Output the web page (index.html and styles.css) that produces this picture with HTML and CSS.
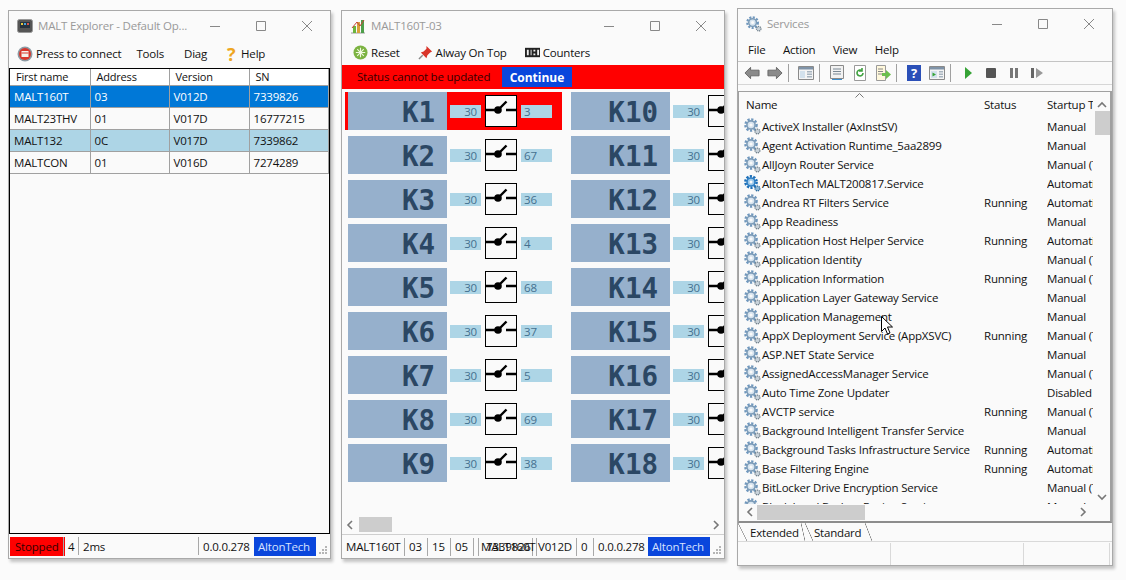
FILE: index.html
```html
<!DOCTYPE html>
<html lang="en">
<head>
    <meta charset="UTF-8">
    <meta name="viewport" content="width=device-width, initial-scale=1.0">
    <title>MALT Explorer desktop</title>
    <link rel="stylesheet" href="styles.css">
</head>
<body>
    <svg class="defs" width="0" height="0">
        <symbol id="caption-min" viewBox="0 0 10 10"><path d="M0 5.500h10" stroke="#888" fill="none"/></symbol>
        <symbol id="caption-max" viewBox="0 0 10 10"><path d="M.5.5h9v9h-9z" stroke="#888" fill="none"/></symbol>
        <symbol id="caption-close" viewBox="0 0 10 10"><path d="M0 0l10 10M10 0L0 10" stroke="#888" fill="none"/></symbol>
        <symbol id="gear" viewBox="0 0 17 17">
            <circle cx="7" cy="7" r="5.6" fill="none" stroke="#6f97bd" stroke-width="2.4" stroke-dasharray="2.2 1.5"/>
            <circle cx="7" cy="7" r="4.1" fill="#d7e4ef" stroke="#7d9cb8" stroke-width="1.6"/>
            <circle cx="7" cy="7" r="1.6" fill="#fafafa"/>
            <circle cx="13.5" cy="13.5" r="2.4" fill="#c9d3db" stroke="#71808c" stroke-width="1.3" stroke-dasharray="1.2 .7"/>
        </symbol>
        <symbol id="gear-live" viewBox="0 0 17 17">
            <circle cx="7" cy="7" r="5.6" fill="none" stroke="#1d6fb8" stroke-width="2.6" stroke-dasharray="2.2 1.3"/>
            <circle cx="7" cy="7" r="4" fill="#9cc8ea" stroke="#2d7fc4" stroke-width="1.6"/>
            <circle cx="7" cy="7" r="1.5" fill="#fafafa"/>
            <circle cx="13.5" cy="13.5" r="2.4" fill="#8fb9d8" stroke="#2c6b9e" stroke-width="1.3" stroke-dasharray="1.2 .7"/>
        </symbol>
        <symbol id="switch" viewBox="0 0 30 30">
            <path d="M0 14h11M20 14h10" stroke="#000" stroke-width="2.400"/>
            <path d="M12 14L20.500 5.500" stroke="#000" stroke-width="2.400"/>
            <circle cx="12" cy="14" r="3.800" fill="#000"/>
        </symbol>
        <symbol id="grip" viewBox="0 0 10 10">
            <path d="M7 1h2v2H7zM4 4h2v2H4zM7 4h2v2H7zM1 7h2v2H1zM4 7h2v2H4zM7 7h2v2H7z" fill="#b5b5b5"/>
        </symbol>
        <symbol id="mmc-pane" viewBox="0 0 16 14">
            <path d="M.5.5h15v13H.5z" fill="#f4f4f4" stroke="#8a8a8a"/>
            <path d="M1 1h14v2.500H1z" fill="#7f93a8"/>
            <path d="M2 5h5v7H2z" fill="#d3e1ec"/>
            <path d="M9 5h5v1.500H9zM9 7.500h5V9H9zM9 10h5v1.500H9z" fill="#a7b4bf"/>
        </symbol>
    </svg>

    <section class="window explorer">
        <header class="titlebar">
            <svg class="app-icon" viewBox="0 0 16 16"><rect x=".5" y="1.500" width="15" height="13" rx="2" fill="#555" stroke="#999"/><rect x="3" y="4" width="10" height="6" fill="#26323d"/><path d="M4 5h2v2H4z" fill="#e7c73c"/><path d="M7 5h2v2H7z" fill="#46a3e0"/><path d="M10 5h2v2h-2z" fill="#d4544a"/></svg>
            <span class="title">MALT Explorer - Default Op...</span>
            <div class="caption">
                <svg><use href="#caption-min"/></svg>
                <svg><use href="#caption-max"/></svg>
                <svg><use href="#caption-close"/></svg>
            </div>
        </header>
        <nav class="menu explorer-menu">
            <span class="menu-item connect">
                <svg class="menu-icon big" viewBox="0 0 16 16"><circle cx="8" cy="8" r="7.500" fill="#8d9aa3"/><circle cx="8" cy="8" r="6" fill="#d8362c"/><path d="M4.500 5h7v6h-7z" fill="#f5f0ea"/><path d="M4.500 7h7" stroke="#d8362c"/></svg>
                Press to connect
            </span>
            <span class="menu-item tools">Tools</span>
            <span class="menu-item diag">Diag</span>
            <span class="menu-item help"><span class="help-mark">?</span>Help</span>
        </nav>
        <div class="device-frame">
            <table class="devices">
                <thead>
                    <tr><th>First name</th><th>Address</th><th>Version</th><th>SN</th></tr>
                </thead>
                <tbody>
                    <tr class="selected"><td>MALT160T</td><td>03</td><td>V012D</td><td>7339826</td></tr>
                    <tr><td>MALT23THV</td><td>01</td><td>V017D</td><td>16777215</td></tr>
                    <tr class="marked"><td>MALT132</td><td>0C</td><td>V017D</td><td>7339862</td></tr>
                    <tr><td>MALTCON</td><td>01</td><td>V016D</td><td>7274289</td></tr>
                </tbody>
            </table>
        </div>
        <footer class="statusbar explorer-status">
            <span class="stopped">Stopped</span>
            <span class="cell count">4</span>
            <span class="cell time">2ms</span>
            <span class="cell build">0.0.0.278</span>
            <span class="brand">AltonTech</span>
            <svg class="grip"><use href="#grip"/></svg>
        </footer>
    </section>

    <section class="window relays">
        <header class="titlebar">
            <svg class="app-icon" viewBox="0 0 16 16"><path d="M1 15h14" stroke="#999"/><path d="M3 8h3v7H3z" fill="#6bb53c"/><path d="M7 4h3v11H7z" fill="#d8a23a"/><path d="M11 2h3v13h-3z" fill="#4d9e4a"/><path d="M2 10l5-6 3 4 4-6" stroke="#c8423a" fill="none"/></svg>
            <span class="title">MALT160T-03</span>
            <div class="caption">
                <svg><use href="#caption-min"/></svg>
                <svg><use href="#caption-max"/></svg>
                <svg><use href="#caption-close"/></svg>
            </div>
        </header>
        <nav class="menu relays-menu">
            <span class="menu-item reset">
                <svg class="menu-icon" viewBox="0 0 16 16"><circle cx="8" cy="8" r="7.500" fill="#7cb342"/><path d="M8 3v10M3 8h10M4.500 4.500l7 7M11.500 4.500l-7 7" stroke="#f1f8e0" stroke-width="1.200"/></svg>
                Reset
            </span>
            <span class="menu-item pin">
                <svg class="menu-icon" viewBox="0 0 16 16"><path d="M9 1l6 6-2 1-3 3-1 3-6-6 3-1 3-3z" fill="#d9352a"/><path d="M5 11l-4 4" stroke="#888" stroke-width="1.500"/></svg>
                Alway On Top
            </span>
            <span class="menu-item counters">
                <svg class="menu-icon" viewBox="0 0 16 16"><path d="M0 3h16v10H0z" fill="#222"/><path d="M2 5h2v6H2zM6 5h1v6H6zM9 5h2v2H9zM9 9h2v2H9zM13 5h2v6h-2z" fill="#eee"/></svg>
                Counters
            </span>
        </nav>
        <div class="alert">
            <span class="alert-text">Status cannot be updated</span>
            <button class="continue">Continue</button>
        </div>
        <div class="relay-pane">
            <div class="relay-grid">
                <div class="relay fault"><span class="tile">K1</span><span class="field value">30</span><svg class="switch"><use href="#switch"/></svg><span class="field">3</span></div>
                <div class="relay"><span class="tile">K2</span><span class="field value">30</span><svg class="switch"><use href="#switch"/></svg><span class="field">67</span></div>
                <div class="relay"><span class="tile">K3</span><span class="field value">30</span><svg class="switch"><use href="#switch"/></svg><span class="field">36</span></div>
                <div class="relay"><span class="tile">K4</span><span class="field value">30</span><svg class="switch"><use href="#switch"/></svg><span class="field">4</span></div>
                <div class="relay"><span class="tile">K5</span><span class="field value">30</span><svg class="switch"><use href="#switch"/></svg><span class="field">68</span></div>
                <div class="relay"><span class="tile">K6</span><span class="field value">30</span><svg class="switch"><use href="#switch"/></svg><span class="field">37</span></div>
                <div class="relay"><span class="tile">K7</span><span class="field value">30</span><svg class="switch"><use href="#switch"/></svg><span class="field">5</span></div>
                <div class="relay"><span class="tile">K8</span><span class="field value">30</span><svg class="switch"><use href="#switch"/></svg><span class="field">69</span></div>
                <div class="relay"><span class="tile">K9</span><span class="field value">30</span><svg class="switch"><use href="#switch"/></svg><span class="field">38</span></div>
                <div class="relay"><span class="tile">K10</span><span class="field value">30</span><svg class="switch"><use href="#switch"/></svg></div>
                <div class="relay"><span class="tile">K11</span><span class="field value">30</span><svg class="switch"><use href="#switch"/></svg></div>
                <div class="relay"><span class="tile">K12</span><span class="field value">30</span><svg class="switch"><use href="#switch"/></svg></div>
                <div class="relay"><span class="tile">K13</span><span class="field value">30</span><svg class="switch"><use href="#switch"/></svg></div>
                <div class="relay"><span class="tile">K14</span><span class="field value">30</span><svg class="switch"><use href="#switch"/></svg></div>
                <div class="relay"><span class="tile">K15</span><span class="field value">30</span><svg class="switch"><use href="#switch"/></svg></div>
                <div class="relay"><span class="tile">K16</span><span class="field value">30</span><svg class="switch"><use href="#switch"/></svg></div>
                <div class="relay"><span class="tile">K17</span><span class="field value">30</span><svg class="switch"><use href="#switch"/></svg></div>
                <div class="relay"><span class="tile">K18</span><span class="field value">30</span><svg class="switch"><use href="#switch"/></svg></div>
            </div>
            <div class="hscroll relay-scroll">
                <svg class="chev" viewBox="0 0 8 10"><path d="M6 1L2 5l4 4" stroke="#777" stroke-width="1.600" fill="none"/></svg>
                <span class="thumb"></span>
                <svg class="chev end" viewBox="0 0 8 10"><path d="M2 1l4 4-4 4" stroke="#777" stroke-width="1.600" fill="none"/></svg>
            </div>
        </div>
        <footer class="statusbar relays-status">
            <span class="cell s-name">MALT160T</span>
            <span class="cell s-num">03</span>
            <span class="cell s-num">15</span>
            <span class="cell s-num">05</span>
            <span class="cell s-stack"><span>MALT160T</span><span>7339826</span></span>
            <span class="cell s-version">V012D</span>
            <span class="cell s-zero">0</span>
            <span class="cell s-build">0.0.0.278</span>
            <span class="brand">AltonTech</span>
            <svg class="grip"><use href="#grip"/></svg>
        </footer>
    </section>

    <section class="window services">
        <header class="titlebar">
            <svg class="app-icon" viewBox="0 0 17 17"><use href="#gear"/></svg>
            <span class="title">Services</span>
            <div class="caption">
                <svg><use href="#caption-min"/></svg>
                <svg><use href="#caption-max"/></svg>
                <svg><use href="#caption-close"/></svg>
            </div>
        </header>
        <nav class="menu services-menu">
            <span class="menu-item">File</span>
            <span class="menu-item">Action</span>
            <span class="menu-item">View</span>
            <span class="menu-item">Help</span>
        </nav>
        <div class="toolbar">
            <span class="tool"><svg viewBox="0 0 17 14"><path d="M1 7l6-6v3h9v6H7v3z" fill="#8b8b8b" stroke="#666"/></svg></span>
            <span class="tool"><svg viewBox="0 0 17 14"><path d="M16 7l-6-6v3H1v6h9v3z" fill="#8b8b8b" stroke="#666"/></svg></span>
            <span class="tool-sep"></span>
            <span class="tool"><svg viewBox="0 0 16 14"><use href="#mmc-pane"/></svg></span>
            <span class="tool-sep"></span>
            <span class="tool"><svg viewBox="0 0 16 16"><path d="M1.500.5h13v13h-13z" fill="#f2f2f2" stroke="#8a8a8a"/><path d="M4 4h8M4 6.500h8M4 9h8" stroke="#7a8894"/><path d="M3 14.500h10" stroke="#3d8fd0"/></svg></span>
            <span class="tool"><svg viewBox="0 0 16 16"><path d="M2.500.5h11v15h-11z" fill="#fff" stroke="#9a9a9a"/><path d="M11 8a3 3 0 1 1-1-2.300M10 3v3H7" stroke="#3fa03f" stroke-width="1.600" fill="none"/></svg></span>
            <span class="tool"><svg viewBox="0 0 16 16"><path d="M1.500.5h9v15h-9z" fill="#fff8dc" stroke="#9a9a9a"/><path d="M3 4h5M3 6.500h5M3 9h4" stroke="#888"/><path d="M7 8h4V5l5 4.500L11 14v-3H7z" fill="#6cbf4b"/></svg></span>
            <span class="tool-sep"></span>
            <span class="tool"><svg viewBox="0 0 14 16"><path d="M0 0h14v16H0z" fill="#2b50b8"/><text x="7" y="13" class="book-mark">?</text></svg></span>
            <span class="tool"><svg viewBox="0 0 16 14"><path d="M.5.5h15v13H.5z" fill="#f4f4f4" stroke="#8a8a8a"/><path d="M1 1h14v2.500H1z" fill="#7f93a8"/><path d="M2 5h6v7H2z" fill="#d3e1ec"/><path d="M3.500 6.500L7 8.500l-3.500 2z" fill="#37a437"/><path d="M10 5h4v1.500h-4zM10 7.500h4V9h-4zM10 10h4v1.500h-4z" fill="#a7b4bf"/></svg></span>
            <span class="tool-sep"></span>
            <span class="tool"><svg viewBox="0 0 16 16"><path d="M5 2l7 6-7 6z" fill="#36a336"/></svg></span>
            <span class="tool"><svg viewBox="0 0 16 16"><rect x="3" y="3" width="10" height="10" rx="1" fill="#555"/></svg></span>
            <span class="tool"><svg viewBox="0 0 16 16"><path d="M4 3h3v10H4zM9 3h3v10H9z" fill="#777"/></svg></span>
            <span class="tool"><svg viewBox="0 0 16 16"><path d="M2 3h3v10H2z" fill="#666"/><path d="M7 3l7 5-7 5z" fill="#999"/></svg></span>
        </div>
        <div class="list-frame">
            <div class="list-body">
                <div class="list-main">
                    <div class="svc-row svc-head">
                        <span class="svc-name">Name</span>
                        <span class="svc-status">Status</span>
                        <span class="svc-start">Startup Type</span>
                        <svg class="sort-caret" viewBox="0 0 9 5"><path d="M.5 4.500l4-4 4 4" stroke="#777" fill="none"/></svg>
                    </div>
                    <div class="svc-row"><span class="svc-name"><svg class="gear"><use href="#gear"/></svg>ActiveX Installer (AxInstSV)</span><span class="svc-status"></span><span class="svc-start">Manual</span></div>
                    <div class="svc-row"><span class="svc-name"><svg class="gear"><use href="#gear"/></svg>Agent Activation Runtime_5aa2899</span><span class="svc-status"></span><span class="svc-start">Manual</span></div>
                    <div class="svc-row"><span class="svc-name"><svg class="gear"><use href="#gear"/></svg>AllJoyn Router Service</span><span class="svc-status"></span><span class="svc-start">Manual (Trigger Start)</span></div>
                    <div class="svc-row"><span class="svc-name"><svg class="gear"><use href="#gear-live"/></svg>AltonTech MALT200817.Service</span><span class="svc-status"></span><span class="svc-start">Automatic</span></div>
                    <div class="svc-row"><span class="svc-name"><svg class="gear"><use href="#gear"/></svg>Andrea RT Filters Service</span><span class="svc-status">Running</span><span class="svc-start">Automatic</span></div>
                    <div class="svc-row"><span class="svc-name"><svg class="gear"><use href="#gear"/></svg>App Readiness</span><span class="svc-status"></span><span class="svc-start">Manual</span></div>
                    <div class="svc-row"><span class="svc-name"><svg class="gear"><use href="#gear"/></svg>Application Host Helper Service</span><span class="svc-status">Running</span><span class="svc-start">Automatic</span></div>
                    <div class="svc-row"><span class="svc-name"><svg class="gear"><use href="#gear"/></svg>Application Identity</span><span class="svc-status"></span><span class="svc-start">Manual (Trigger Start)</span></div>
                    <div class="svc-row"><span class="svc-name"><svg class="gear"><use href="#gear"/></svg>Application Information</span><span class="svc-status">Running</span><span class="svc-start">Manual (Trigger Start)</span></div>
                    <div class="svc-row"><span class="svc-name"><svg class="gear"><use href="#gear"/></svg>Application Layer Gateway Service</span><span class="svc-status"></span><span class="svc-start">Manual</span></div>
                    <div class="svc-row"><span class="svc-name"><svg class="gear"><use href="#gear"/></svg>Application Management</span><span class="svc-status"></span><span class="svc-start">Manual</span></div>
                    <div class="svc-row"><span class="svc-name"><svg class="gear"><use href="#gear"/></svg>AppX Deployment Service (AppXSVC)</span><span class="svc-status">Running</span><span class="svc-start">Manual (Trigger Start)</span></div>
                    <div class="svc-row"><span class="svc-name"><svg class="gear"><use href="#gear"/></svg>ASP.NET State Service</span><span class="svc-status"></span><span class="svc-start">Manual</span></div>
                    <div class="svc-row"><span class="svc-name"><svg class="gear"><use href="#gear"/></svg>AssignedAccessManager Service</span><span class="svc-status"></span><span class="svc-start">Manual (Trigger Start)</span></div>
                    <div class="svc-row"><span class="svc-name"><svg class="gear"><use href="#gear"/></svg>Auto Time Zone Updater</span><span class="svc-status"></span><span class="svc-start">Disabled</span></div>
                    <div class="svc-row"><span class="svc-name"><svg class="gear"><use href="#gear"/></svg>AVCTP service</span><span class="svc-status">Running</span><span class="svc-start">Manual (Trigger Start)</span></div>
                    <div class="svc-row"><span class="svc-name"><svg class="gear"><use href="#gear"/></svg>Background Intelligent Transfer Service</span><span class="svc-status"></span><span class="svc-start">Manual</span></div>
                    <div class="svc-row"><span class="svc-name"><svg class="gear"><use href="#gear"/></svg>Background Tasks Infrastructure Service</span><span class="svc-status">Running</span><span class="svc-start">Automatic</span></div>
                    <div class="svc-row"><span class="svc-name"><svg class="gear"><use href="#gear"/></svg>Base Filtering Engine</span><span class="svc-status">Running</span><span class="svc-start">Automatic</span></div>
                    <div class="svc-row"><span class="svc-name"><svg class="gear"><use href="#gear"/></svg>BitLocker Drive Encryption Service</span><span class="svc-status"></span><span class="svc-start">Manual (Trigger Start)</span></div>
                    <div class="svc-row"><span class="svc-name"><svg class="gear"><use href="#gear"/></svg>Block Level Backup Engine Service</span><span class="svc-status"></span><span class="svc-start">Manual</span></div>
                </div>
                <div class="vscroll">
                    <svg class="vchev" viewBox="0 0 10 8"><path d="M1 6l4-4 4 4" stroke="#777" stroke-width="1.600" fill="none"/></svg>
                    <span class="vthumb"></span>
                    <svg class="vchev vend" viewBox="0 0 10 8"><path d="M1 2l4 4 4-4" stroke="#777" stroke-width="1.600" fill="none"/></svg>
                </div>
            </div>
            <div class="hscroll list-scroll">
                <svg class="chev" viewBox="0 0 8 10"><path d="M6 1L2 5l4 4" stroke="#777" stroke-width="1.600" fill="none"/></svg>
                <span class="thumb"></span>
                <svg class="chev end" viewBox="0 0 8 10"><path d="M2 1l4 4-4 4" stroke="#777" stroke-width="1.600" fill="none"/></svg>
            </div>
        </div>
        <div class="tabs">
            <span class="tab">Extended</span>
            <span class="tab">Standard</span>
        </div>
        <footer class="svc-status-bar">
            <span></span><span></span><span></span>
        </footer>
    </section>

    <svg class="cursor" viewBox="0 0 12 19"><path d="M.5.500v15l3.500-3.500 2.500 6 2.500-1-2.500-6h5z" fill="#fff" stroke="#000"/></svg>
</body>
</html>
```

FILE: styles.css
```css
* {
    box-sizing: border-box;
}
html, body {
    margin: 0;
    height: 100%;
}
body {
    position: relative;
    overflow: hidden;
    width: 1126px;
    height: 580px;
    background-color: #fbfbfb;
    font-family: "Open Sans", "Noto Sans", sans-serif;
    font-size: 11.5px;
    letter-spacing: -0.2px;
    color: #111;
}
.defs {
    position: absolute;
}

/* windows sit on the desktop */
.window {
    position: absolute;
    display: flex;
    flex-direction: column;
    background: #fafafa;
    border: 1px solid #a9a9a9;
    box-shadow: 2px 3px 3px rgba(0, 0, 0, 0.22);
    overflow: hidden;
}
.explorer {
    left: 8px;
    top: 10px;
    width: 323px;
    height: 549px;
}
.relays {
    left: 341px;
    top: 10px;
    width: 384px;
    height: 549px;
}
.services {
    left: 737px;
    top: 8px;
    width: 376px;
    height: 558px;
}

.titlebar {
    display: flex;
    align-items: center;
    height: 29px;
    flex: none;
    padding-left: 8px;
}
.app-icon {
    width: 16px;
    height: 16px;
    flex: none;
    margin-right: 5px;
}
.title {
    color: #999;
    white-space: nowrap;
}
.caption {
    display: flex;
    flex: none;
    margin-left: auto;
}
.caption svg {
    width: 46px;
    height: 10px;
}

.menu {
    display: flex;
    align-items: center;
    flex: none;
}
.menu-item {
    display: flex;
    align-items: center;
    white-space: nowrap;
}
.menu-icon {
    width: 15px;
    height: 15px;
    margin-right: 3px;
}
.menu-icon.big {
    width: 16px;
    height: 16px;
    margin-right: 3px;
}
.explorer-menu {
    height: 28px;
    padding: 0 0 1px 8px;
}
.tools {
    margin-left: 15px;
}
.diag {
    margin-left: 20px;
}
.help {
    margin-left: 17px;
}
.help-mark {
    width: 14px;
    margin-right: 3px;
    color: #eea621;
    font-size: 18px;
    font-weight: 700;
    line-height: 16px;
    text-align: center;
}
.relays-menu {
    height: 25px;
    padding-left: 11px;
}
.pin {
    margin-left: 18px;
}
.counters {
    margin-left: 18px;
}
.services-menu {
    height: 24px;
    padding-left: 10px;
    gap: 17.5px;
    border-bottom: 1px solid #c4c4c4;
}

/* device list */
.device-frame {
    flex: 1;
    background: #fafafa;
    border: 1px solid #000;
}
.devices {
    width: 319px;
    table-layout: fixed;
    border-collapse: collapse;
}
.devices th, .devices td {
    padding: 0 0 0 4px;
    border: 1px solid #a0a0a0;
    font-weight: 400;
    text-align: left;
    white-space: nowrap;
}
.devices th {
    height: 16px;
    padding-left: 6px;
    border-top: 0;
    border-left-color: #d6d6d6;
    background: #fff;
    font-size: 11px;
}
.devices td {
    height: 22px;
}
.devices th:first-child, .devices td:first-child {
    width: 80px;
    border-left: 0;
}
.devices th:nth-child(2), .devices td:nth-child(2) {
    width: 79px;
}
.devices th:nth-child(3), .devices td:nth-child(3) {
    width: 80px;
}
.selected td {
    background: #0078d7;
    color: #fff;
}
.marked td {
    background: #add5e6;
}

/* status bars */
.statusbar {
    display: flex;
    align-items: center;
    flex: none;
    height: 24px;
}
.cell {
    display: flex;
    align-items: center;
    height: 18px;
    padding-left: 4px;
    border-right: 1px solid #a8a8a8;
    white-space: nowrap;
}
.brand {
    display: flex;
    align-items: center;
    height: 19px;
    padding-left: 4px;
    background: #0a46dc;
    color: #d5e2ff;
}
.grip {
    width: 10px;
    height: 10px;
    align-self: flex-end;
    margin: 0 2px 3px auto;
}
.explorer-status {
    padding-left: 1px;
}
.stopped {
    display: flex;
    align-items: center;
    width: 54px;
    height: 19px;
    padding-left: 5px;
    background: #f00;
    color: #300;
    border-right: 1px solid #a8a8a8;
    box-shadow: 1px 0 0 #f00;
}
.count {
    width: 15px;
}
.time {
    width: 120px;
}
.build {
    width: 55px;
    padding-left: 4px;
    border-right: 0;
}
.explorer-status .brand {
    width: 62px;
}
.relays-status {
    border-top: 1px solid #cfcfcf;
    padding-left: 4px;
}
.s-name {
    width: 59px;
    padding-left: 0;
}
.s-num {
    width: 23px;
}
.s-stack {
    display: grid;
    width: 55px;
    padding-left: 2px;
    border-left: 1px solid #a8a8a8;
    margin-left: 4px;
}
.s-stack span {
    grid-area: 1 / 1;
}
.s-stack span:last-child {
    margin-left: 5px;
}
.s-version {
    width: 41px;
    padding-left: 1px;
    margin-left: 3px;
    border-left: 1px solid #a8a8a8;
}
.s-zero {
    width: 17px;
}
.s-build {
    width: 54px;
    border-right: 0;
}
.relays-status .brand {
    width: 62px;
}

/* relay board */
.alert {
    display: flex;
    align-items: center;
    flex: none;
    height: 24px;
    padding-left: 15px;
    background: #f00;
}
.alert-text {
    width: 145px;
    padding-bottom: 1px;
    color: #300;
}
.continue {
    width: 70px;
    height: 20px;
    padding: 0;
    border: 0;
    background: #0a46dc;
    color: #fff;
    font-family: inherit;
    font-size: 12px;
    font-weight: 700;
}
.relay-pane {
    display: flex;
    flex-direction: column;
    flex: 1;
    min-height: 0;
}
.relay-grid {
    flex: 1;
    display: grid;
    grid-template-rows: repeat(9, 38px);
    grid-auto-flow: column;
    grid-auto-columns: 214px;
    column-gap: 9px;
    row-gap: 6px;
    padding: 3px 0 0 6px;
    overflow: hidden;
}
.relay {
    display: flex;
    align-items: center;
    height: 38px;
}
.relay.fault {
    width: 217px;
    margin-left: -3px;
    padding-left: 3px;
    background: #f00;
}
.tile {
    width: 99px;
    height: 38px;
    flex: none;
    padding-right: 12px;
    background: #96b0cc;
    color: #2b4764;
    font-family: "DejaVu Sans Mono", monospace;
    font-size: 27.5px;
    font-weight: 700;
    letter-spacing: 0;
    line-height: 40px;
    text-align: right;
}
.field {
    width: 31px;
    height: 13px;
    flex: none;
    padding-left: 3px;
    background: #add5e6;
    color: #44708f;
    line-height: 13px;
}
.field.value {
    margin: 0 4px 0 3px;
    padding: 0 4px 0 0;
    text-align: right;
}
.switch {
    width: 32px;
    height: 32px;
    flex: none;
    margin-right: 4px;
    border: 1px solid #000;
    background: #fafafa;
}

/* scrollbars */
.hscroll {
    display: flex;
    align-items: center;
    flex: none;
    height: 17px;
}
.relay-scroll {
    margin-bottom: 1px;
    padding-left: 4px;
}
.chev {
    width: 8px;
    height: 10px;
}
.chev.end {
    margin-left: auto;
    margin-right: 4px;
}
.thumb {
    height: 15px;
    background: #cdcdcd;
}
.relay-scroll .thumb {
    width: 33px;
    margin-left: 5px;
}

/* services console */
.toolbar {
    display: flex;
    align-items: center;
    flex: none;
    height: 23px;
    padding-left: 2px;
    border-bottom: 1px solid #d6d6d6;
}
.tool {
    display: flex;
    align-items: center;
    justify-content: center;
    width: 23px;
    height: 18px;
}
.tool svg {
    width: 16px;
    height: 16px;
}
.tool-sep {
    width: 1px;
    height: 18px;
    margin: 0 5px 0 2px;
    background: #a0a0a0;
}
.book-mark {
    fill: #fff;
    font-size: 13px;
    font-weight: 700;
    text-anchor: middle;
}
.list-frame {
    display: flex;
    flex-direction: column;
    height: 432px;
    flex: none;
    margin-top: 6px;
    border: 1px solid #a0a0a0;
    border-bottom: 2px solid #8c8c8c;
    border-right-width: 2px;
}
.list-body {
    display: flex;
    flex: 1;
    min-height: 0;
}
.list-main {
    position: relative;
    flex: 1;
    min-width: 0;
    overflow: hidden;
}
.svc-row {
    display: flex;
    align-items: center;
    height: 19px;
    padding-left: 5px;
    white-space: nowrap;
}
.svc-head {
    height: 25px;
    padding-left: 7px;
}
.svc-name {
    display: flex;
    align-items: center;
    width: 240px;
    flex: none;
}
.svc-head .svc-name {
    width: 238px;
}
.svc-status {
    width: 63px;
    flex: none;
}
.svc-start {
    width: 46px;
    flex: none;
    overflow: hidden;
}
.gear {
    width: 17px;
    height: 17px;
    margin-right: 1px;
    flex: none;
}
/* small arrow resting on the header */
.sort-caret {
    position: absolute;
    left: 116px;
    top: 1px;
    width: 9px;
    height: 5px;
}
.vscroll {
    display: flex;
    flex-direction: column;
    align-items: center;
    width: 16px;
    flex: none;
    padding-top: 9px;
}
.vchev {
    width: 10px;
    height: 8px;
    flex: none;
}
.vthumb {
    width: 15px;
    height: 24px;
    margin-top: 2px;
    background: #cdcdcd;
}
.vchev.vend {
    margin-top: auto;
    margin-bottom: 3px;
}
.list-scroll {
    padding-left: 7px;
    height: 16px;
    margin-bottom: 1px;
}
.list-scroll .thumb {
    width: 108px;
    margin-left: 3px;
}
.list-scroll .chev.end {
    margin-right: 23px;
}

.tabs {
    display: flex;
    flex: none;
    height: 19px;
    border-bottom: 1px solid #d9d9d9;
}
.tab {
    display: flex;
    align-items: center;
    width: 67px;
    height: 18px;
    padding: 0 0 0 12px;
}
.tab:first-child {
    background:
        linear-gradient(to bottom left, transparent calc(50% - 0.6px), #777 50%, transparent calc(50% + 0.6px)) left / 9px 18px no-repeat,
        linear-gradient(to top right, transparent calc(50% - 0.6px), #777 50%, transparent calc(50% + 0.6px)) right / 4px 18px no-repeat;
}
.tab:last-child {
    padding-left: 9px;
    background:
        linear-gradient(to bottom left, transparent calc(50% - 0.6px), #777 50%, transparent calc(50% + 0.6px)) left / 8px 18px no-repeat,
        linear-gradient(to top right, transparent calc(50% - 0.6px), #777 50%, transparent calc(50% + 0.6px)) right / 7px 18px no-repeat;
}
.svc-status-bar {
    display: grid;
    grid-template-columns: 153px 133px 86px;
    flex: 1;
    padding-top: 1px;
}
.svc-status-bar span {
    border-right: 1px solid #d9d9d9;
}

.cursor {
    position: absolute;
    left: 881px;
    top: 316px;
    width: 12px;
    height: 19px;
}
```
